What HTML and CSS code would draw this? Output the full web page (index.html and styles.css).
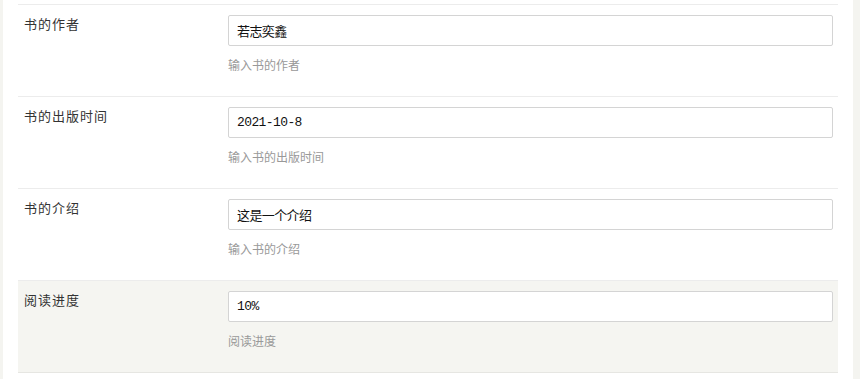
FILE: index.html
```html
<!DOCTYPE html>
<html lang="zh-CN">
<head>
  <meta charset="UTF-8">
  <title>编辑书籍</title>
  <link rel="stylesheet" href="styles.css">
</head>
<body>

<div class="panel">
  <div class="form-row">
    <label class="form-label" for="author">书的作者</label>
    <div class="form-field">
      <input type="text" id="author" value="若志奕鑫">
      <p class="help">输入书的作者</p>
    </div>
  </div>

  <div class="form-row">
    <label class="form-label" for="pubdate">书的出版时间</label>
    <div class="form-field">
      <input type="text" id="pubdate" value="2021-10-8">
      <p class="help">输入书的出版时间</p>
    </div>
  </div>

  <div class="form-row">
    <label class="form-label" for="intro">书的介绍</label>
    <div class="form-field">
      <input type="text" id="intro" value="这是一个介绍">
      <p class="help">输入书的介绍</p>
    </div>
  </div>

  <div class="form-row active">
    <label class="form-label" for="progress">阅读进度</label>
    <div class="form-field">
      <input type="text" id="progress" value="10%">
      <p class="help">阅读进度</p>
    </div>
  </div>
</div>

</body>
</html>
```

FILE: styles.css
```css
body {
  margin: 0;
  padding: 0;
  background-color: #f4f4f0;
  font-family: "Noto Sans CJK SC", "Liberation Sans", sans-serif;
}

.panel {
  margin: 0 7px 0 3px;
  padding: 4px 15px 0 15px;
  height: 375px;
  background-color: white;
}

.form-row {
  display: flex;
  border-top: 1px solid #ececec;
  padding: 10px 0 0 0;
  height: 81px;
}

.form-row.active {
  background-color: #f5f5f1;
  border-bottom: 1px solid #e6e6e2;
}

.form-label {
  width: 204px;
  padding-left: 6px;
  font-size: 13px;
  line-height: 17px;
  letter-spacing: 1px;
  color: #333;
}

.form-field {
  flex: 1;
  margin-right: 5px;
}

input {
  box-sizing: border-box;
  display: block;
  width: 100%;
  height: 31px;
  padding: 0 8px;
  border: 1px solid #d4d4d4;
  border-radius: 2px;
  background-color: white;
  font-family: "Liberation Mono", "Noto Sans CJK SC", monospace;
  font-size: 13px;
  letter-spacing: -0.6px;
  color: #111;
}

.help {
  margin: 10px 0 0 0;
  font-size: 12px;
  line-height: 18px;
  color: #999;
}
```
